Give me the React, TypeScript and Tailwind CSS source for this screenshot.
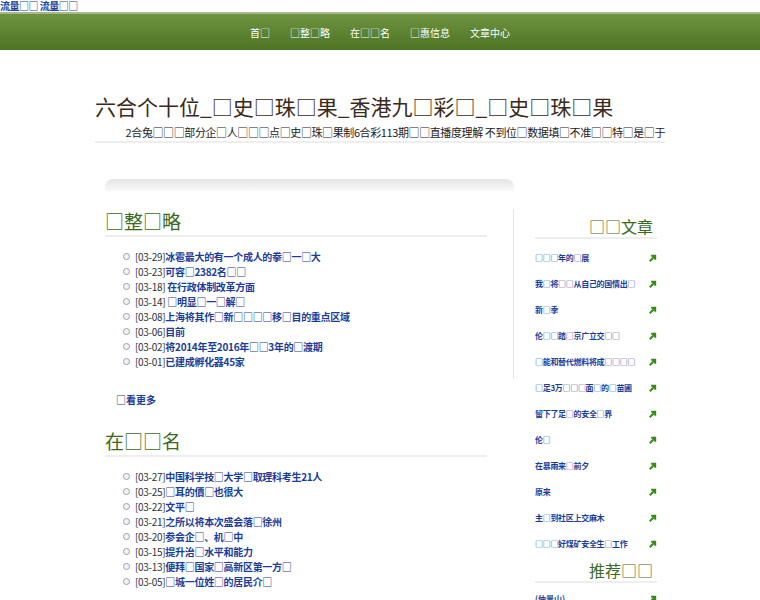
const F = { fontFamily: '"Noto Sans CJK SC","Liberation Sans",sans-serif' };
const list1 = [
  ["03-29", "冰雹最大的有一个成人的拳□一□大"],
  ["03-23", "可容□2382名□□"],
  ["03-18", " 在行政体制改革方面"],
  ["03-14", " □明显□一□解□"],
  ["03-08", "上海将其作□新□□□□移□目的重点区域"],
  ["03-06", "目前"],
  ["03-02", "将2014年至2016年□□3年的□渡期"],
  ["03-01", "已建成孵化器45家"],
];
const list2 = [
  ["03-27", "中国科学技□大学□取理科考生21人"],
  ["03-25", "□耳的價□也很大"],
  ["03-22", "文平□"],
  ["03-21", "之所以将本次盛会落□徐州"],
  ["03-20", "参会企□、机□中"],
  ["03-15", "提升治□水平和能力"],
  ["03-13", "便拜□国家□高新区第一方□"],
  ["03-05", "□城一位姓□的居民介□"],
];
const side = ["□□□年的□展","我□将□□从自己的国情出□","新□季","伦□□踏□京广立交□□","□能和替代燃料将成□□□□","□足3万□□□面□的□苗圃","留下了足□的安全□界","伦□","在暴雨来□前夕","原来","主□到社区上交麻木","□□□好煤矿安全生□工作"];
function Arrow() {
  return <svg width="9" height="9" viewBox="0 0 10 10" className="shrink-0"><path d="M2 8 L8 2 M3.5 2 H8 V6.5" stroke="#3a8a1a" strokeWidth="2.2" fill="none"/></svg>;
}
function Items({ items }: { items: string[][] }) {
  return (
    <ul className="ml-[18px] mt-[12px]">
      {items.map(([d, t], i) => (
        <li key={i} className="flex items-center h-[15px] text-[10px] whitespace-nowrap tracking-[-0.3px]">
          <span className="w-[7px] h-[7px] rounded-full border border-gray-400 bg-gray-100 mr-[5px]" />
          <span className="text-[#333]">[{d}]</span>
          <span className="text-[#1a3d9a] font-bold whitespace-pre">{t}</span>
        </li>
      ))}
    </ul>
  );
}
export default function App() {
  return (
    <div className="w-[760px] h-[600px] bg-white overflow-hidden" style={F}>
      <div className="h-[12px] text-[10px] leading-[12px] text-[#1a3d9a] font-bold whitespace-nowrap tracking-[-0.5px]">流量□□ 流量□□</div>
      <div className="h-[38px] bg-gradient-to-b from-[#6f9440] to-[#4d7424] border-t-2 border-[#a7b88e] flex items-center justify-center gap-[20px] text-[10px] text-white">
        <span>首□</span><span>□整□略</span><span>在□□名</span><span>□惠信息</span><span>文章中心</span>
      </div>
      <div className="mx-[95px] mt-[42px] border-b-2 border-[#eee] pb-[1px]">
        <h1 className="text-[21px] leading-[28px] text-[#3b2a1a] whitespace-nowrap">六合个十位_□史□珠□果_香港九□彩□_□史□珠□果</h1>
        <div className="text-right text-[11px] leading-[16px] text-[#222] mt-[4px] whitespace-nowrap tracking-[-0.4px]">2合兔□□□部分企□人□□□点□史□珠□果制6合彩113期□□直播度理解 不到位□数据填□不准□□特□是□于</div>
      </div>
      <div className="ml-[105px] mt-[36px] w-[409px] h-[12px] rounded-t-[8px] bg-gradient-to-b from-[#e4e4e4] to-[#fafafa]" />
      <div className="flex ml-[105px] mt-[18px]">
        <div className="w-[382px]">
          <h2 className="text-[19px] leading-[24px] text-[#3a6a1a] border-b-2 border-[#eee] pb-[2px]">□整□略</h2>
          <Items items={list1} />
          <div className="ml-[11px] mt-[23px] text-[10px] font-bold text-[#1a3d9a]">□看更多</div>
          <h2 className="mt-[22px] text-[19px] leading-[24px] text-[#3a6a1a] border-b-2 border-[#eee] pb-[2px]">在□□名</h2>
          <Items items={list2} />
        </div>
        <div className="ml-[26px] w-0 h-[170px] border-l border-[#e5e5e5]" />
        <div className="ml-[21px] w-[122px]">
          <div className="mt-[6px] text-right text-[16px] leading-[22px] text-[#3a6a1a] pr-[4px] border-b-2 border-[#eee]">□□文章</div>
          <div className="mt-[6px]">
            {side.map((s, i) => (
              <div key={i} className="flex items-center justify-between h-[26px] text-[8px] font-bold text-[#1a3d9a] whitespace-nowrap tracking-[-0.3px]"><span>{s}</span><Arrow /></div>
            ))}
          </div>
          <div className="mt-[2px] text-right text-[16px] leading-[22px] text-[#3a6a1a] pr-[4px] border-b-2 border-[#eee]">推荐□□</div>
          <div className="mt-[6px] flex items-center justify-between h-[20px] text-[8px] font-bold text-[#1a3d9a]"><span>(仲景山)</span><Arrow /></div>
        </div>
      </div>
    </div>
  );
}
